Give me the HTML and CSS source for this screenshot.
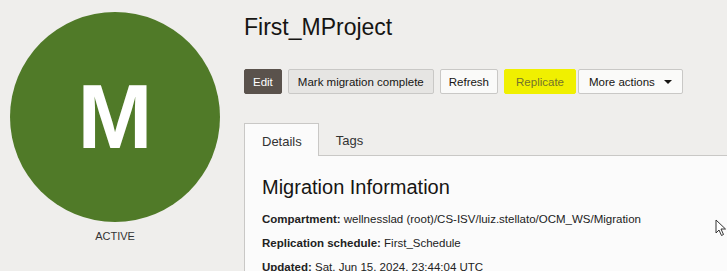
FILE: index.html
```html
<!DOCTYPE html>
<html lang="en">

<head>
    <meta charset="UTF-8">
    <title>First_MProject</title>
    <link rel="stylesheet" href="styles.css">
</head>

<body>
    <div class="page">
        <div class="side">
            <div class="avatar">M</div>
            <p class="state">ACTIVE</p>
        </div>
        <div class="main">
            <h1 class="title">First_MProject</h1>
            <div class="actions">
                <button class="btn btn-dark">Edit</button>
                <button class="btn btn-grey">Mark migration complete</button>
                <button class="btn">Refresh</button>
                <button class="btn btn-mark">Replicate</button>
                <button class="btn btn-menu">More actions <span class="caret"></span></button>
            </div>
            <div class="tabs">
                <div class="tab tab-on">Details</div>
                <div class="tab">Tags</div>
            </div>
            <div class="panel">
                <h2>Migration Information</h2>
                <p class="row"><b>Compartment:</b> wellnesslad (root)/CS-ISV/luiz.stellato/OCM_WS/Migration</p>
                <p class="row"><b>Replication schedule:</b> First_Schedule</p>
                <p class="row"><b>Updated:</b> Sat, Jun 15, 2024, 23:44:04 UTC</p>
            </div>
        </div>
    </div>

    <!-- mouse pointer -->
    <svg class="pointer" width="12" height="18" viewBox="0 0 12 18">
        <path d="M1 1 L1 14 L4 11 L6.5 16.5 L8.5 15.5 L6 10 L10.5 10 Z" fill="#fff" stroke="#333" stroke-width="1"/>
    </svg>
</body>

</html>
```

FILE: styles.css
```css
html, body {
    height: 271px;
    overflow: hidden;
}

body {
    margin: 0;
    background-color: #efeeec;
    font-family: "Liberation Sans", Arial, sans-serif;
    color: #161513;
}

.page {
    display: flex;
    gap: 14px;
}

.side {
    width: 230px;
    flex-shrink: 0;
    display: flex;
    flex-direction: column;
    align-items: center;
    padding-top: 12px;
}

.avatar {
    width: 210px;
    height: 210px;
    border-radius: 50%;
    background-color: #507a28;
    color: #ffffff;
    font-weight: bold;
    font-size: 90px;
    display: flex;
    align-items: center;
    justify-content: center;
}

.state {
    margin: 8px 0 0;
    font-size: 11px;
    color: #333;
}

.main {
    flex: 1;
}

.title {
    font-size: 23px;
    font-weight: normal;
    margin: 14px 0 0;
    line-height: 27px;
}

.actions {
    display: flex;
    gap: 6px;
    margin-top: 28px;
}

.btn {
    font-family: inherit;
    font-size: 11.5px;
    height: 25px;
    padding: 0 8px;
    border: 1px solid #c9c8c6;
    border-radius: 2px;
    background-color: #fafaf9;
    color: #161513;
}

.btn-dark {
    background-color: #5a524c;
    border-color: #5a524c;
    color: #ffffff;
}

.btn-grey {
    padding: 0 9px;
    background-color: #e6e5e3;
}

.btn-mark {
    background-color: #f0f000;
    border-color: #f0f000;
    color: #73732c;
    width: 72px;
}

.btn-menu {
    margin-left: -4px;
    padding: 0 10px;
    display: flex;
    align-items: center;
    gap: 9px;
}

.caret {
    width: 0;
    height: 0;
    border-left: 4px solid transparent;
    border-right: 4px solid transparent;
    border-top: 4px solid #161513;
}

.tabs {
    display: flex;
    margin-top: 29px;
    border-bottom: 1px solid #c9c8c6;
    height: 32px;
}

.tab {
    font-size: 13px;
    padding: 10px 16px 0 17px;
    color: #333;
}

.tab-on {
    background-color: #fbfbfb;
    border: 1px solid #c9c8c6;
    border-bottom: none;
    margin-bottom: -1px;
}

.panel {
    background-color: #fbfbfb;
    border-left: 1px solid #c9c8c6;
    padding: 20px 17px 0;
    height: 100px;
}

.panel h2 {
    font-size: 20px;
    font-weight: normal;
    margin: 0 0 14px;
}

.row {
    font-size: 11.5px;
    margin: 0 0 12px;
    color: #222;
}

.pointer {
    position: absolute;
    left: 715px;
    top: 219px;
}
```
